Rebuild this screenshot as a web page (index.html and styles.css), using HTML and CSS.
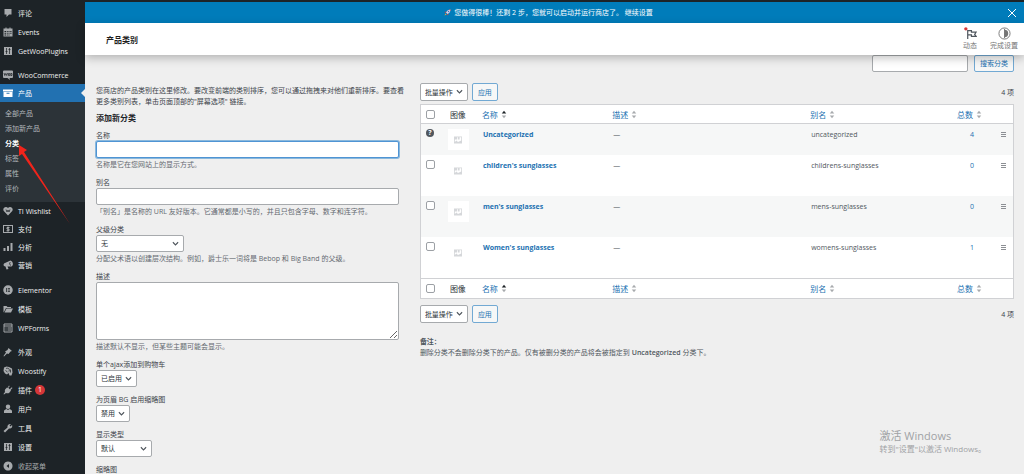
FILE: index.html
```html
<!DOCTYPE html>
<html lang="zh-CN">
<head>
<meta charset="UTF-8">
<title>产品类别</title>
<link rel="stylesheet" href="styles.css">
</head>
<body>
	<svg class="defs" aria-hidden="true">
		<symbol id="i-sort" viewBox="0 0 6 10"><path class="up" d="M0.5 4L3 0.8 5.5 4z"/><path class="down" d="M0.5 6L3 9.2 5.5 6z"/></symbol>
		<symbol id="i-sliders" viewBox="0 0 20 20"><path d="M2 2h16v16H2z"/><path class="line" d="M7 4v12M13 4v12M5 11h4M11 7h4"/></symbol>
		<symbol id="i-image" viewBox="0 0 10 9"><path fill-rule="evenodd" d="M0 0h10v9H0zM1 4v3l2-2 2 2 4-2V1H7v3H5V1H4v3z"/></symbol>
	</svg>
	<div id="wrap">
		<nav id="menu">
			<ul class="group loose">
				<li><a href="#"><svg viewBox="0 0 20 20"><path d="M3 2h14v11h-5l-5 5v-5H3z"/></svg>评论</a></li>
				<li><a href="#"><svg viewBox="0 0 20 20"><path fill-rule="evenodd" d="M1 3h4V1h2v2h6V1h2v2h4v16H1zM3 8v2h3V8zM7.500 8v2h2V8zM11 8v2h2V8zM14.500 8v2H17V8zM3 11.500v2h3v-2zM7.500 11.500v2h2v-2zM11 11.500v2h2v-2zM14.500 11.500v2H17v-2zM3 15v2h3v-2zM7.500 15v2h2v-2zM11 15v2h2v-2z"/></svg>Events</a></li>
				<li><a href="#"><svg><use href="#i-sliders"/></svg>GetWooPlugins</a></li>
			</ul>
			<ul class="group woo">
				<li><a href="#"><svg viewBox="0 0 20 20"><path d="M2 1h16a2 2 0 0 1 2 2v11a2 2 0 0 1-2 2h-5l1 4-5-4H2a2 2 0 0 1-2-2V3a2 2 0 0 1 2-2z"/><path class="line" d="M2 6l1.500 5L5.500 7l2 4L9 6M11 7h2.500v4H11zM15.500 7H18v4h-2.500z"/></svg>WooCommerce</a></li>
				<li class="current"><a href="#"><svg viewBox="0 0 20 20"><path fill-rule="evenodd" d="M0 3h20v4H0zM1 8h18v10H1zM7 9.500v2h6v-2z"/></svg>产品</a>
					<ul class="submenu">
						<li><a href="#">全部产品</a></li>
						<li><a href="#">添加新产品</a></li>
						<li><a href="#" class="active">分类</a></li>
						<li><a href="#">标签</a></li>
						<li><a href="#">属性</a></li>
						<li><a href="#">评价</a></li>
					</ul>
				</li>
				<li><a href="#"><svg viewBox="0 0 20 20"><path d="M10 19L1.500 10C-2 4 6-1 10 4c4-5 12 0 8.500 6z"/><path class="line" d="M6 7l2 5 2-4 2 4 2-5"/></svg>TI Wishlist</a></li>
				<li><a href="#"><svg viewBox="0 0 20 20"><path fill-rule="evenodd" d="M0 2h20v16H0zM2 4v12h16V4z"/><path class="stroke" d="M13 7H8v3h4v3.500H7M10 5v10"/></svg>支付</a></li>
				<li><a href="#"><svg viewBox="0 0 20 20"><path d="M1 12h4v6H1zM8 8h4v10H8zM15 2h4v16h-4z"/></svg>分析</a></li>
				<li><a href="#"><svg viewBox="0 0 20 20"><path d="M18 3c3 4 2 9-1 10L9 13l2 5-4 1-2-6c-5 0-5-6-1-7L15 1z"/><path class="line" d="M15 4c-3 2-2 6 1 7"/></svg>营销</a></li>
			</ul>
			<ul class="group loose">
				<li><a href="#"><svg viewBox="0 0 20 20"><circle cx="10" cy="10" r="9.500"/><path class="line" d="M7 6v8M9.500 7H14M9.500 10H14M9.500 13H14"/></svg>Elementor</a></li>
				<li><a href="#"><svg viewBox="0 0 20 20"><path d="M1 4h6l2 2h7v2H6L3 14l-2 3zM7 9h13l-4 8H3z"/></svg>模板</a></li>
				<li><a href="#"><svg viewBox="0 0 20 20"><path class="stroke" d="M2 2h16v16H2zM2 6h16M5 10h2M9 10h7M5 14h2M9 14h7"/></svg>WPForms</a></li>
			</ul>
			<ul class="group loose">
				<li><a href="#"><svg viewBox="0 0 20 20"><path d="M11 2l7 6-3 1-4 5-3-1-6 6-1-1 5-7-2-2 5-3z"/></svg>外观</a></li>
				<li><a href="#"><svg viewBox="0 0 20 20"><path d="M2 3l5-2 5 1 6 3 1 8-2 6h-4l-2-5-3 3-4-2-3-5z"/><path class="line" d="M6 5c5-2 8 1 6 6M5 9l4 3M15 7v6"/></svg>Woostify</a></li>
				<li><a href="#"><svg viewBox="0 0 20 20"><path d="M12 1l1.500 1.500-3 3 3 3 4-4L19 6l-4 4 1 1-3 4c-2 2-5 2-7 1l-4 3-1-1 3-4c-1-3 0-5 1-6l3-3 1 1z"/></svg>插件<span class="badge">1</span></a></li>
				<li><a href="#"><svg viewBox="0 0 20 20"><circle cx="10" cy="5.500" r="4.500"/><path d="M2 18v-4c0-3 4-3 5-4l3 2 3-2c1 1 5 1 5 4v4z"/></svg>用户</a></li>
				<li><a href="#"><svg viewBox="0 0 20 20"><path d="M16 2l-3 3 2 2 3-3c2 4-2 8-6 7l-8 8-3-3 8-7c-1-5 3-8 7-7z"/></svg>工具</a></li>
				<li><a href="#"><svg><use href="#i-sliders"/></svg>设置</a></li>
				<li><a href="#" class="collapse"><svg viewBox="0 0 20 20"><path fill-rule="evenodd" d="M10 1a9 9 0 1 0 0.100 0zM12 6v8l-5-4z"/></svg>收起菜单</a></li>
			</ul>
		</nav>

		<div id="content">
			<div id="notice">
				<svg class="rocket" viewBox="0 0 14 14"><path fill="#d9d3e8" d="M13 1c-4 0-7 2-9 6l3 3c4-2 6-5 6-9z"/><path fill="#e0393b" d="M5 5L1 6l2 2zM9 9l-1 4-2-2zM10 1l3 3V1z"/><path fill="#f7a531" d="M3 9l-2 4 4-2z"/><circle cx="9" cy="5" r="1.500" fill="#3b6fb5"/></svg>
				<span>您做得很棒！还剩 2 步，您就可以启动并运行商店了。 <a href="#">继续设置</a></span>
				<button type="button" class="close" aria-label="关闭"><svg viewBox="0 0 10 10"><path d="M1 1l8 8M9 1L1 9"/></svg></button>
			</div>
			<header>
				<h1>产品类别</h1>
				<div class="tabs">
					<button type="button"><svg viewBox="0 0 14 14"><path fill="none" stroke="#50575e" stroke-width="1.300" d="M4 13V4h4v1.500h5l-1.500 2.500L13 10H8V8.500H4"/><circle cx="2" cy="2" r="1.800" fill="#d63638"/></svg>动态</button>
					<button type="button"><svg viewBox="0 0 14 14"><circle cx="7" cy="7" r="6" fill="none" stroke="#757575"/><path fill="#757575" d="M7 3a4 4 0 0 1 0 8z"/><path stroke="#757575" d="M7 2v10"/></svg>完成设置</button>
				</div>
			</header>

			<main>
				<form class="search">
					<input type="text" aria-label="搜索分类">
					<button type="button">搜索分类</button>
				</form>
				<div class="columns">
					<form class="add">
						<p class="intro">您商店的产品类别在这里修改。要改变前端的类别排序，您可以通过拖拽来对他们重新排序。要查看更多类别列表，单击页面顶部的"屏幕选项" 链接。</p>
						<h2>添加新分类</h2>
						<div class="field">
							<label for="name">名称</label>
							<input type="text" id="name" class="focused">
							<p>名称是它在您网站上的显示方式。</p>
						</div>
						<div class="field">
							<label for="slug">别名</label>
							<input type="text" id="slug">
							<p>「别名」是名称的 URL 友好版本。它通常都是小写的，并且只包含字母、数字和连字符。</p>
						</div>
						<div class="field">
							<label for="parent">父级分类</label>
							<select id="parent" class="wide"><option>无</option></select>
							<p>分配父术语以创建层次结构。例如，爵士乐一词将是 Bebop 和 Big Band 的父级。</p>
						</div>
						<div class="field">
							<label for="description">描述</label>
							<textarea id="description"></textarea>
							<p>描述默认不显示，但某些主题可能会显示。</p>
						</div>
						<div class="field">
							<label for="ajax">单个ajax添加到购物车</label>
							<select id="ajax"><option>已启用</option></select>
						</div>
						<div class="field">
							<label for="bg">为页眉 BG 启用缩略图</label>
							<select id="bg"><option>禁用</option></select>
						</div>
						<div class="field">
							<label for="display">显示类型</label>
							<select id="display" class="medium"><option>默认</option></select>
						</div>
						<div class="field"><span>缩略图</span></div>
					</form>

					<section class="list">
						<div class="tablenav">
							<select aria-label="批量操作"><option>批量操作</option></select>
							<button type="button">应用</button>
							<span class="count">4 项</span>
						</div>
						<table>
							<thead>
								<tr>
									<th class="cb"><input type="checkbox" aria-label="全选"></th>
									<th class="thumb">图像</th>
									<th class="name"><a href="#">名称<svg class="sort asc"><use href="#i-sort"/></svg></a></th>
									<th class="desc"><a href="#">描述<svg class="sort"><use href="#i-sort"/></svg></a></th>
									<th><a href="#">别名<svg class="sort"><use href="#i-sort"/></svg></a></th>
									<th class="posts"><a href="#">总数<svg class="sort"><use href="#i-sort"/></svg></a></th>
									<th class="handle"></th>
								</tr>
							</thead>
							<tbody>
								<tr class="default">
									<td class="cb"><span class="help">?</span></td>
									<td class="thumb"><span><svg><use href="#i-image"/></svg></span></td>
									<td><a href="#"><b>Uncategorized</b></a></td>
									<td>—</td>
									<td>uncategorized</td>
									<td class="posts"><a href="#">4</a></td>
									<td class="handle"><i></i></td>
								</tr>
								<tr>
									<td class="cb"><input type="checkbox" aria-label="children's sunglasses"></td>
									<td class="thumb"><span><svg><use href="#i-image"/></svg></span></td>
									<td><a href="#"><b>children's sunglasses</b></a></td>
									<td>—</td>
									<td>childrens-sunglasses</td>
									<td class="posts"><a href="#">0</a></td>
									<td class="handle"><i></i></td>
								</tr>
								<tr>
									<td class="cb"><input type="checkbox" aria-label="men's sunglasses"></td>
									<td class="thumb"><span><svg><use href="#i-image"/></svg></span></td>
									<td><a href="#"><b>men's sunglasses</b></a></td>
									<td>—</td>
									<td>mens-sunglasses</td>
									<td class="posts"><a href="#">0</a></td>
									<td class="handle"><i></i></td>
								</tr>
								<tr>
									<td class="cb"><input type="checkbox" aria-label="Women's sunglasses"></td>
									<td class="thumb"><span><svg><use href="#i-image"/></svg></span></td>
									<td><a href="#"><b>Women's sunglasses</b></a></td>
									<td>—</td>
									<td>womens-sunglasses</td>
									<td class="posts"><a href="#">1</a></td>
									<td class="handle"><i></i></td>
								</tr>
							</tbody>
							<tfoot>
								<tr>
									<th class="cb"><input type="checkbox" aria-label="全选"></th>
									<th class="thumb">图像</th>
									<th><a href="#">名称<svg class="sort asc"><use href="#i-sort"/></svg></a></th>
									<th><a href="#">描述<svg class="sort"><use href="#i-sort"/></svg></a></th>
									<th><a href="#">别名<svg class="sort"><use href="#i-sort"/></svg></a></th>
									<th class="posts"><a href="#">总数<svg class="sort"><use href="#i-sort"/></svg></a></th>
									<th class="handle"></th>
								</tr>
							</tfoot>
						</table>
						<div class="tablenav bottom">
							<select aria-label="批量操作"><option>批量操作</option></select>
							<button type="button">应用</button>
							<span class="count">4 项</span>
						</div>
						<p class="note"><b>备注：</b><br>删除分类不会删除分类下的产品。仅有被删分类的产品将会被指定到 <b>Uncategorized</b> 分类下。</p>
					</section>
				</div>
			</main>
		</div>
	</div>

	<svg class="arrow" viewBox="0 0 54 82"><path d="M1 1l8 5-3 2 46 72L4 10l-3 2z"/></svg>
	<div class="watermark"><strong>激活 Windows</strong><span>转到"设置"以激活 Windows。</span></div>
</body>
</html>
```

FILE: styles.css
```css
* {
	box-sizing: border-box;
}

body {
	margin: 0;
	height: 100vh;
	overflow: hidden;
	background-color: #efefef;
	border-top: 2px solid #1d2327;
	color: #3c434a;
	font: 7px/11px "Open Sans", "Noto Sans CJK SC", sans-serif;
}

ul {
	list-style: none;
	margin: 0;
	padding: 0;
}

h1, h2, p {
	margin: 0;
}

a {
	color: #2271b1;
	text-decoration: none;
}

button, input, select, textarea {
	font: inherit;
	color: #2c3338;
	margin: 0;
}

.defs {
	display: none;
}

#wrap {
	display: flex;
	height: 100%;
}

/* side menu */
#menu {
	width: 85px;
	flex: none;
	padding-top: 2px;
	background-color: #1d2327;
}

.group {
	display: flex;
	flex-direction: column;
	margin-bottom: 6px;
}

.group.woo {
	margin-bottom: 7px;
}

.loose {
	gap: 1px;
}

#menu a {
	display: flex;
	align-items: center;
	gap: 5px;
	height: 18px;
	padding-left: 3px;
	color: #f0f0f1;
}

#menu svg {
	width: 10px;
	height: 10px;
	fill: #a7aaad;
}

#menu .line, #i-sliders .line {
	fill: none;
	stroke: #1d2327;
	stroke-width: 1.5;
}

#menu .stroke {
	fill: none;
	stroke: #a7aaad;
	stroke-width: 2;
}

#menu .current > a {
	background-color: #2271b1;
	color: #fff;
	position: relative;
}

#menu .current > a::after {
	content: "";
	position: absolute;
	right: 0;
	border: 4px solid transparent;
	border-right-color: #efefef;
	border-left: 0;
}

#menu .current > a svg {
	fill: #fff;
}

#menu .submenu {
	padding: 4px 0 6px;
	background-color: #2c3338;
}

#menu .submenu a {
	height: 15px;
	padding-left: 5px;
	color: #b4b9be;
}

#menu .submenu .active {
	color: #fff;
	font-weight: bold;
}

#menu .collapse {
	color: #a7aaad;
}

.badge {
	width: 10px;
	height: 10px;
	margin-left: -2px;
	border-radius: 5px;
	background-color: #d63638;
	color: #fff;
	line-height: 10px;
	text-align: center;
}

/* top bars */
#content {
	flex: 1;
	min-width: 0;
}

#notice {
	display: flex;
	align-items: center;
	justify-content: center;
	gap: 3px;
	height: 21px;
	padding-right: 12px;
	position: relative;
	background-color: #007cba;
	color: #fff;
}

#notice a {
	color: #fff;
}

.rocket {
	width: 7px;
	height: 7px;
}

#notice .close {
	position: absolute;
	right: 7px;
	width: 10px;
	height: 10px;
	padding: 0;
	border: 0;
	background: none;
}

.close svg {
	display: block;
	stroke: #fff;
}

header {
	display: flex;
	align-items: center;
	justify-content: space-between;
	height: 32px;
	padding: 0 6px 0 21px;
	position: relative;
	background-color: #fff;
	box-shadow: 0 3px 10px rgba(0, 0, 0, 0.25);
}

h1 {
	color: #1e1e1e;
	font-size: 8px;
	font-weight: 600;
}

.tabs {
	display: flex;
	gap: 13px;
}

.tabs button {
	display: flex;
	flex-direction: column;
	align-items: center;
	padding: 0;
	border: 0;
	background: none;
	color: #757575;
}

.tabs svg {
	width: 13px;
	height: 13px;
}

/* controls */
main {
	padding: 0 10px 0 11px;
}

input[type="text"], textarea, select {
	display: block;
	border: 1px solid #a7aaad;
	border-radius: 2px;
	background-color: #fff;
}

input[type="text"] {
	width: 100%;
	height: 17px;
	padding: 0 4px;
}

input[type="text"].focused {
	border-color: #4f94d4;
	box-shadow: 0 0 0 1px #8ab8dc;
}

textarea {
	width: 100%;
	height: 58px;
}

select {
	height: 17px;
	padding: 0 14px 0 4px;
	appearance: none;
	background: #fff url("data:image/svg+xml,%3Csvg xmlns='http://www.w3.org/2000/svg' viewBox='0 0 8 6'%3E%3Cpath d='M1 1l3 3 3-3' fill='none' stroke='%2350575e' stroke-width='1.3'/%3E%3C/svg%3E") no-repeat right 4px center / 7px 6px;
}

.wide {
	width: 88px;
}

.medium {
	width: 56px;
}

.search button, .tablenav button {
	height: 17px;
	padding: 0 5px;
	border: 1px solid #72a9d3;
	border-radius: 2px;
	background-color: #f6f7f7;
	color: #2271b1;
}

.search {
	display: flex;
	justify-content: flex-end;
	gap: 6px;
}

.search input[type="text"] {
	width: 96px;
}

.search button {
	min-width: 40px;
}

.columns {
	display: grid;
	grid-template-columns: 53fr 100fr;
	gap: 9px;
	padding-top: 11px;
}

/* add form */
.add {
	padding-top: 2px;
}

h2 {
	margin: 5px 0 7px;
	color: #1d2327;
	font-size: 8px;
	line-height: 11px;
}

.field {
	margin: 0 12px 7px 0;
}

.field label {
	display: block;
}

.field p {
	padding-top: 1px;
	color: #646970;
	white-space: nowrap;
}

/* category table */
.tablenav {
	display: flex;
	align-items: center;
	gap: 4px;
	padding-bottom: 3px;
}

.tablenav select, .tablenav button {
	height: 18px;
}

.count {
	margin-left: auto;
}

table {
	width: 100%;
	table-layout: fixed;
	border: 1px solid #d0d1d4;
	border-spacing: 0;
	background-color: #fff;
}

th, td {
	padding: 0 6px;
	text-align: left;
	font-weight: normal;
}

th {
	height: 19px;
	color: #2c3338;
	font-size: 8px;
}

thead th {
	border-bottom: 1px solid #d0d1d4;
}

tfoot th {
	height: 20px;
	border-top: 1px solid #d0d1d4;
}

td {
	height: 41px;
	padding: 5px 7px 0;
	vertical-align: top;
	color: #50575e;
}

.default td {
	height: 31px;
}

tbody tr:nth-child(odd) {
	background-color: #f6f7f7;
}

.cb {
	width: 20px;
	padding-left: 5px;
	padding-right: 0;
}

.cb input {
	display: block;
	width: 9px;
	height: 9px;
	appearance: none;
	border: 1px solid #9ca0a5;
	border-radius: 2px;
	background-color: #fff;
}

.help {
	display: block;
	width: 8px;
	height: 8px;
	border-radius: 4px;
	background-color: #50575e;
	color: #fff;
	font-weight: bold;
	line-height: 8px;
	text-align: center;
}

.thumb {
	width: 35px;
}

th.thumb {
	padding-left: 9px;
}

.thumb span {
	display: flex;
	align-items: center;
	justify-content: center;
	width: 21px;
	height: 21px;
	background-color: #fff;
}

.thumb svg {
	width: 8px;
	height: 8px;
	fill: #d5d7da;
}

.name {
	width: 22%;
}

.desc {
	width: 198px;
}

.posts {
	width: 42px;
}

.handle {
	width: 20px;
}

td.posts {
	text-align: center;
}

.handle i {
	display: block;
	width: 5px;
	height: 5px;
	margin: 3px 0 0 1px;
	border: solid #8c8f94;
	border-width: 1px 0;
	background: linear-gradient(#8c8f94, #8c8f94) center / 100% 1px no-repeat;
}

.sort {
	width: 6px;
	height: 9px;
	margin-left: 3px;
	vertical-align: -1px;
	fill: #a7aaad;
}

.asc {
	fill: #1d2327;
}

.down {
	fill: #a7aaad;
}

.bottom {
	padding: 6px 0 0;
}

.note {
	padding-top: 13px;
	color: #50575e;
}

.note b {
	font-weight: 600;
}

/* overlays */
.arrow {
	position: absolute;
	left: 18px;
	top: 144px;
	width: 54px;
	height: 82px;
	fill: #f0241b;
}

.watermark {
	position: absolute;
	right: 38px;
	bottom: 20px;
	display: flex;
	flex-direction: column;
	color: #a0a2a5;
	font-size: 8px;
}

.watermark strong {
	font-size: 11px;
	font-weight: normal;
	line-height: 14px;
}
```
